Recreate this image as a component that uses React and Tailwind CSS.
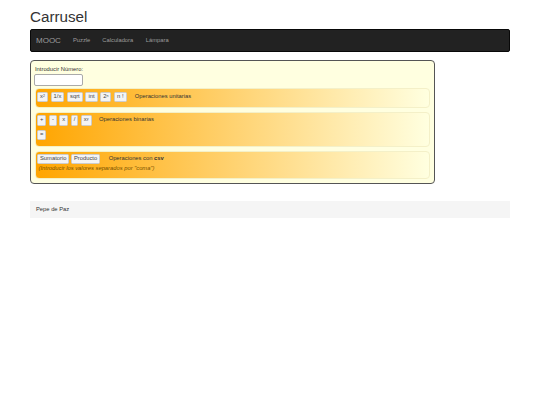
function Btn({ children, className = "" }) {
  return (
    <button className={"h-[10.5px] px-[2px] bg-[#f4f4f4] border-[0.5px] border-[#ccc] rounded-[1.5px] text-[#444] text-[5.8px] leading-none flex items-center justify-center " + className}>
      {children}
    </button>
  );
}

function Sup({ base, exp }) {
  return (
    <span>
      {base}
      <sup className="text-[3.6px] relative -top-[1px] align-baseline">{exp}</sup>
    </span>
  );
}

function Row({ className = "", children }) {
  return (
    <div className={"rounded-[4px] border-[0.5px] border-[#f4f0c8] bg-linear-to-r/srgb from-[#ffa500] to-[#ffffe0] " + className}>
      {children}
    </div>
  );
}

export default function App() {
  return (
    <div className="min-h-[405px] bg-white font-['Liberation_Sans',Arial,sans-serif] text-[#333] px-[30px] w-[540px]">
      <h1 className="pt-[8px] text-[15.2px] leading-[17px] h-[29px] font-normal text-[#333]">Carrusel</h1>

      <nav className="h-[23px] bg-[#222] border-[0.5px] border-[#080808] rounded-[2px] flex items-center pl-[5px]">
        <span className="text-[8px] text-[#9d9d9d] mr-[12px]">MOOC</span>
        <span className="text-[5.8px] text-[#9d9d9d] mr-[12px]">Puzzle</span>
        <span className="text-[5.8px] text-[#9d9d9d] mr-[12.5px]">Calculadora</span>
        <span className="text-[5.8px] text-[#9d9d9d]">Lámpara</span>
      </nav>

      <div className="mt-[8px] w-[405px] h-[124px] bg-[#ffffe0] border border-[#555] rounded-[4px] px-[4px] pt-[5px]">
        <div className="text-[5.8px] leading-[7px] text-[#333]">Introducir Número:</div>
        <div className="mt-[0.5px] w-[49px] h-[12px] -ml-[1px] bg-white border-[0.5px] border-[#aaa] rounded-[2px]" />

        <Row className="mt-[2.5px] h-[20px] flex items-start pt-[2.5px] pl-[1px] gap-[2.7px]">
          <Btn><Sup base="x" exp="2" /></Btn>
          <Btn>1/x</Btn>
          <Btn>sqrt</Btn>
          <Btn>int</Btn>
          <Btn><Sup base="2" exp="n" /></Btn>
          <Btn>n !</Btn>
          <span className="ml-[5.5px] text-[5.8px] leading-[9px] text-[#333]">Operaciones unitarias</span>
        </Row>

        <Row className="mt-[3.5px] h-[35px] pl-[1px] pt-[2.5px]">
          <div className="flex items-center gap-[2.5px]">
            <Btn>+</Btn>
            <Btn>-</Btn>
            <Btn>x</Btn>
            <Btn>/</Btn>
            <Btn><Sup base="x" exp="y" /></Btn>
            <span className="ml-[5px] text-[5.8px] text-[#333] -translate-y-[1px]">Operaciones binarias</span>
          </div>
          <Btn className="mt-[4px]">=</Btn>
        </Row>

        <Row className="mt-[4px] h-[28px] pl-[1px] pt-[2px]">
          <div className="flex items-center gap-[1.5px]">
            <Btn>Sumatorio</Btn>
            <Btn>Producto</Btn>
            <span className="ml-[7px] text-[5.8px] text-[#333]">Operaciones con <b>csv</b></span>
          </div>
          <div className="mt-[0.5px] ml-[1.5px] text-[5.8px] leading-[7px] italic text-[#7a5200]">(Introducir los valores separados por "coma")</div>
        </Row>
      </div>

      <footer className="mt-[17px] h-[17px] bg-[#f5f5f5] flex items-center pl-[6px] text-[5.8px] text-[#333]">Pepe de Paz</footer>
    </div>
  );
}
